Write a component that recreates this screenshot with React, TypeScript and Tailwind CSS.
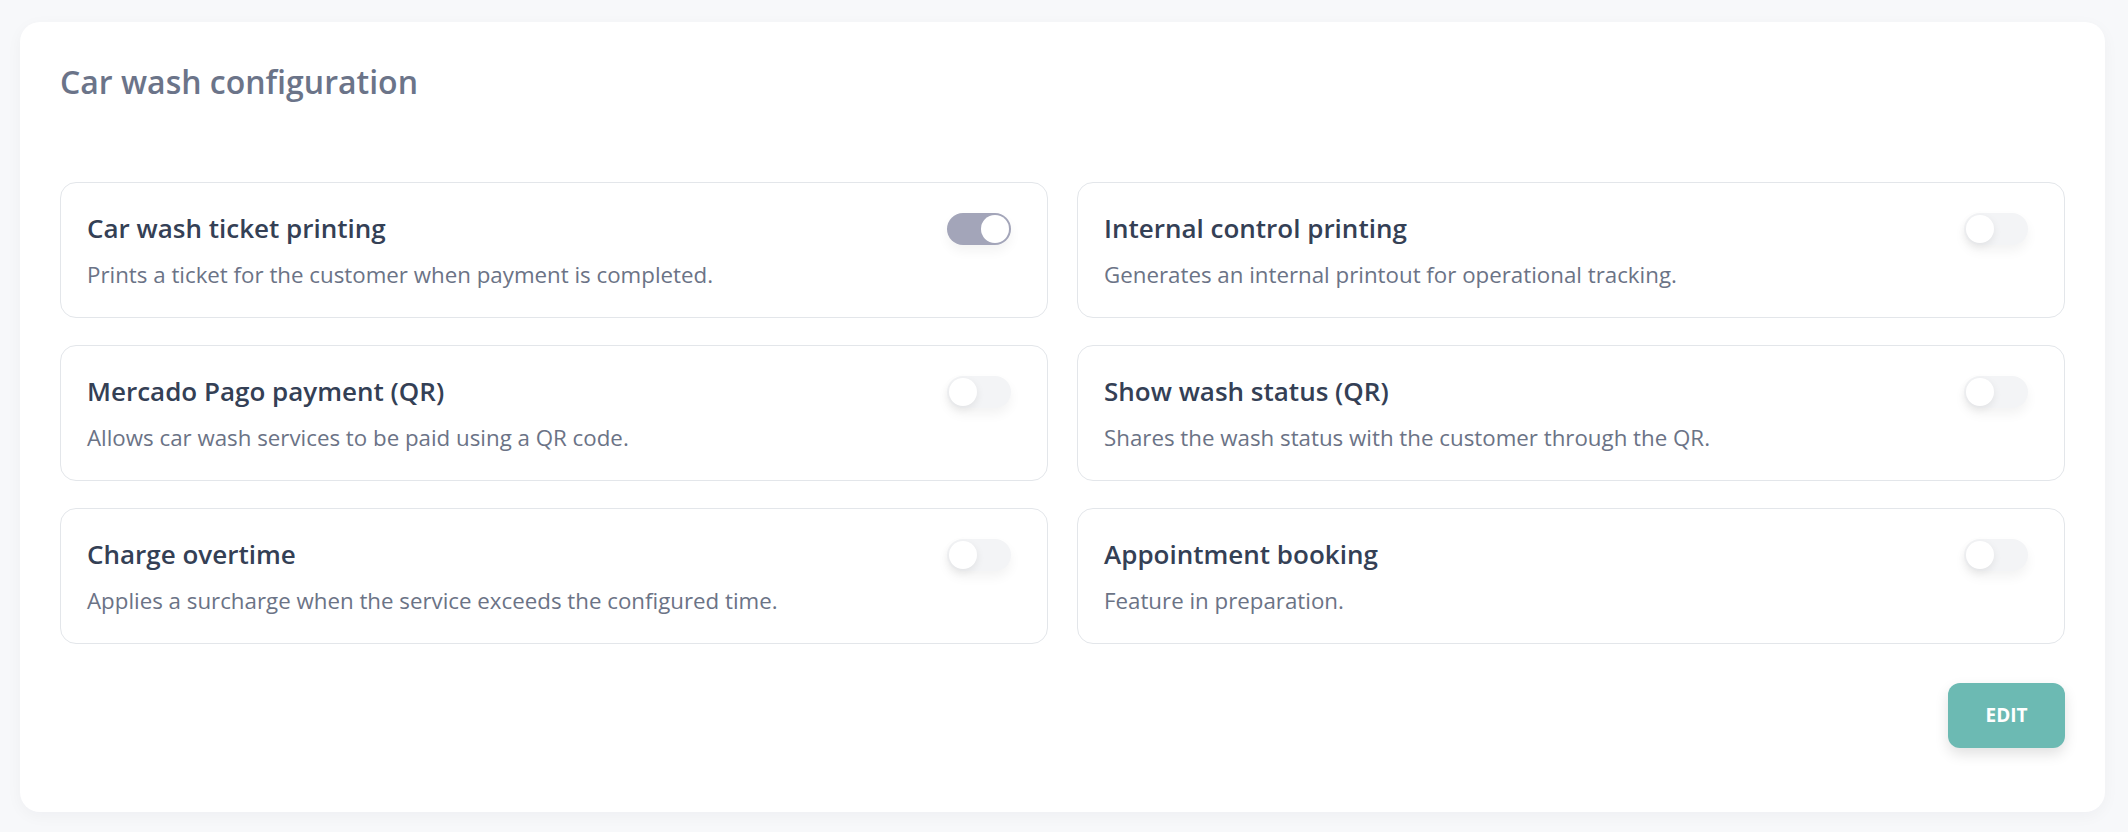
import React, { useState } from 'react';

type Setting = {
  id: string;
  title: string;
  description: string;
  enabled: boolean;
};

const SETTINGS: Setting[] = [
  { id: 'ticket', title: 'Car wash ticket printing', description: 'Prints a ticket for the customer when payment is completed.', enabled: true },
  { id: 'internal', title: 'Internal control printing', description: 'Generates an internal printout for operational tracking.', enabled: false },
  { id: 'mp', title: 'Mercado Pago payment (QR)', description: 'Allows car wash services to be paid using a QR code.', enabled: false },
  { id: 'status', title: 'Show wash status (QR)', description: 'Shares the wash status with the customer through the QR.', enabled: false },
  { id: 'overtime', title: 'Charge overtime', description: 'Applies a surcharge when the service exceeds the configured time.', enabled: false },
  { id: 'booking', title: 'Appointment booking', description: 'Feature in preparation.', enabled: false },
];

function Toggle({ on }: { on: boolean }) {
  return (
    <span
      className={`relative inline-flex h-8 w-16 shrink-0 items-center rounded-full shadow-[0_6px_12px_rgba(0,0,0,0.05)] ${
        on ? 'bg-[#a3a5b9]' : 'bg-[#f3f4f6]'
      }`}
    >
      <span
        className={`absolute top-[2px] h-7 w-7 rounded-full bg-white ${
          on ? 'right-[2px]' : 'left-[2px] shadow-[0_3px_8px_rgba(0,0,0,0.08)]'
        }`}
      />
    </span>
  );
}

function SettingCard({ item }: { item: Setting }) {
  return (
    <div className="rounded-2xl border border-[#e3e6ea] bg-white pl-[26px] pr-[36px] pt-[26px] pb-[27px]">
      <div className="flex items-center justify-between">
        <h3 className="text-[26px] leading-[39px] font-semibold text-[#344055]">{item.title}</h3>
        <Toggle on={item.enabled} />
      </div>
      <p className="mt-[12px] text-[22.3px] leading-[30px] text-[#6b7386]">{item.description}</p>
    </div>
  );
}

export default function App() {
  const [settings] = useState(SETTINGS);

  return (
    <div
      className="min-h-screen bg-[#f7f8fa] pl-[20px] pr-[23px] pt-[22px] pb-[20px]"
      style={{ fontFamily: '"Open Sans", "Noto Sans", sans-serif' }}
    >
      <div className="rounded-[20px] bg-white px-[40px] pt-[40px] pb-[64px] shadow-[0_4px_16px_rgba(15,23,42,0.04)]">
        <h2 className="text-[32px] leading-[40px] font-semibold text-[#6b7489]">Car wash configuration</h2>

        <div className="mt-[80px] grid grid-cols-2 gap-x-[29px] gap-y-[27px]">
          {settings.map((s) => (
            <SettingCard key={s.id} item={s} />
          ))}
        </div>

        <div className="mt-[39px] flex justify-end">
          <button className="h-[65px] w-[117px] rounded-xl bg-[#6cbab3] text-[19px] font-bold text-white shadow-[0_6px_14px_rgba(0,0,0,0.12)]">
            EDIT
          </button>
        </div>
      </div>
    </div>
  );
}
